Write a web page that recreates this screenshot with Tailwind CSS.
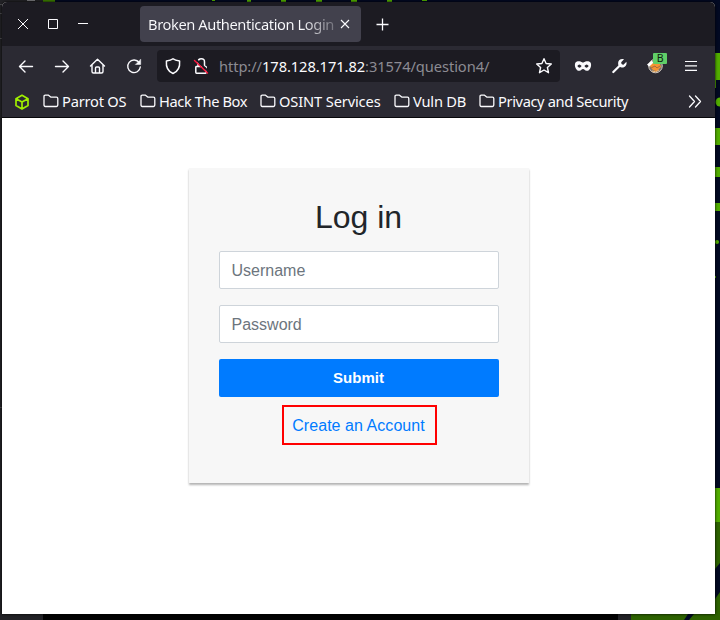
<!DOCTYPE html>
<html lang="en">
<head>
<meta charset="utf-8">
<title>Broken Authentication Login</title>
<script src="https://cdn.jsdelivr.net/npm/@tailwindcss/browser@4"></script>
</head>
<body class="relative h-[620px] w-[720px] overflow-hidden bg-[#020922] font-['Noto_Sans',sans-serif]">
<!-- desktop wallpaper -->
<svg class="absolute inset-0" width="720" height="620" viewBox="0 0 720 620">
  <path fill="#222226" d="M0 0h45v620H0z"/><path stroke="#49494d" d="M0 4.500h4M0 13.500h4M0 38.500h4M0 407.500h4"/>
  <path fill="#77777a" d="M27 0h8v1h-8z"/><path fill="#3c7a00" d="M43 0h12v2H43z"/>
  <g fill="#52ad00"><path d="M212 0h3v1h-3zM247 0h4v2h-4zM281 0h5v2h-5zM316 0h6v2h-6zM351 0h6v2h-6zM387 0h5v2h-5zM422 0h5v1h-5z"/>
  <rect x="708" y="53" width="24" height="27" rx="5"/><path d="M715 80h1v8h-1z"/><circle cx="720" cy="102" r="4.500"/><rect x="710" y="128" width="15" height="17" rx="4"/><rect x="711" y="167" width="14" height="10" rx="3"/><rect x="712" y="203" width="12" height="8" rx="2"/><circle cx="717" cy="242" r="2"/><path d="M715 276h1v2h-1z"/><path d="M715 488h5v34h-5z"/></g>
  <path fill="#2d6200" d="M617 614h98v-92h5v98H631z"/><path fill="#020922" d="M715 569l5-6v29l-5 7zM688 614h6l-5 6h-5z"/>
  <path fill="#020202" d="M43 614h575v6H43z"/><path fill="#222226" d="M618 614h13v6h-13z"/>
</svg>
<div class="relative ml-[2px] mt-[2px] flex h-[612px] w-[713px] flex-col overflow-hidden rounded-t-[5px] bg-white shadow-[0_0_3px_#000]">
  <!-- tab strip -->
  <div class="flex h-11 shrink-0 items-start bg-[#1c1b22] text-[#fbfbfe]">
    <svg class="shrink-0" width="138" height="44" fill="none" stroke="currentColor"><path d="M16 17l10 10M26 17l-10 10M76 21.500h10"/><path d="M46.500 17.500h9v9h-9z"/></svg>
    <div class="mt-1 flex h-9 w-[221px] items-center rounded bg-[#42414d] pl-[8px]">
      <div class="w-[187px] whitespace-nowrap bg-linear-to-r from-[#fbfbfe] from-82% to-[#fbfbfe]/25 bg-clip-text text-[14.67px] leading-6 tracking-[-0.4px] text-transparent">Broken Authentication Login</div>
      <svg class="ml-[5px]" width="10" height="10" fill="none" stroke="currentColor" stroke-width="1.100"><path d="M1 1l8 8M9 1l-8 8"/></svg>
    </div>
    <svg class="ml-[15px] mt-4" width="13" height="13" stroke="currentColor" stroke-width="1.300"><path d="M6.500 0.500v12M0.500 6.500h12"/></svg>
  </div>
  <!-- navigation bar -->
  <div class="flex h-10 shrink-0 items-center bg-[#2b2a33] text-[#fbfbfe]">
    <svg class="shrink-0" width="155" height="40" fill="none" stroke="currentColor" stroke-width="1.400" stroke-linecap="round" stroke-linejoin="round">
      <path d="M30.500 20.500H17.500M23 15l-5.500 5.500L23 26M53.500 20.500h13M61 15l5.500 5.500L61 26"/>
      <path d="M88.500 20l7-6.800 7 6.800M90 19v6.500q0 1.500 1.500 1.500h8q1.500 0 1.500-1.500V19M93.500 27v-5q0-1 1-1h2q1 0 1 1v5"/>
      <path d="M137.200 16.700A6.300 6.300 0 1 0 138.300 21"/><path fill="currentColor" stroke-width=".5" d="M138.700 13.500v5h-5z"/>
    </svg>
    <div class="flex h-8 w-[403px] items-center rounded bg-[#1c1b22]">
      <svg class="shrink-0" width="62" height="32" fill="none" stroke="currentColor" stroke-width="1.500" stroke-linejoin="round" stroke-linecap="round">
        <path d="M16 8.700c2 1.700 4 2 6.600 2.300.5 5.500-1.600 10.500-6.600 12.500-5-2-7.100-7-6.600-12.500C12 10.700 14 10.400 16 8.700z"/>
        <path d="M39.500 16.500h9q.7 0 .7.700v5q0 1-.7 1h-9q-.7 0-.7-1v-5q0-.7.700-.7M41 15.500V12q0-3.300 3.300-3.300T47.500 12v4"/><path stroke="#1c1b22" stroke-width="2" d="M39 9.500l12.500 12"/><path stroke="#ff173f" stroke-width="1.400" d="M37.500 10.500l13 12.500"/>
      </svg>
      <div class="w-[309px] whitespace-nowrap text-[14.67px] leading-6 tracking-[-0.07px] text-[#8c8b92]">http://<span class="text-[#fbfbfe]">178.128.171.82</span>:31574/question4/</div>
      <svg class="ml-[7px]" width="18" height="18" viewBox="0 0 18 18" fill="none" stroke="currentColor" stroke-width="1.400" stroke-linejoin="round"><path d="M9 1.700l2.100 4.800 5.200.5-3.900 3.500 1.100 5.200L9 13l-4.500 2.700 1.100-5.200L1.700 7l5.200-.5z"/></svg>
    </div>
    <svg class="shrink-0" width="153" height="40" viewBox="0 0 153 40" fill="none" stroke="currentColor">
      <path fill="currentColor" fill-rule="evenodd" stroke="none" d="M15.500 16.500C16.500 15.300 18 15 19.500 15.200C21 15.400 22 16.200 23 16.800C24 16.200 25 15.400 26.500 15.200C28 15 29.500 15.300 30.500 16.500C31.400 18 31.300 20.500 30.300 22.300C29.400 24.200 28 25 26.500 24.800C24.900 24.500 24.200 23 23 23C21.800 23 21.100 24.500 19.500 24.800C18 25 16.600 24.200 15.700 22.300C14.700 20.500 14.600 18 15.500 16.500zM17.300 20.100Q19.300 16.800 21.600 20.100Q19.500 23.200 17.300 20.100zM24.400 20.100Q26.700 16.800 28.700 20.100Q26.500 23.200 24.400 20.100z"/>
      <path stroke-width="2.200" stroke-linecap="round" d="M53.300 26l7.400-7.300"/><path fill="currentColor" stroke="none" d="M64 13.300l-2.800 3 .3 2 2 .4 2.900-3c.8 3.500-1.400 6.100-4.800 5.700-2.300-.3-3.700-2-3.500-4.400.2-2.900 2.800-4.700 5.900-3.700z"/>
      <circle cx="95.500" cy="20" r="6.800" fill="#77706d" stroke="#cfc6bd"/><path fill="#fff" stroke="none" d="M87 18.500l5-4 2 4-5 2z"/><path fill="#f49432" stroke="none" d="M90 20l5-5 5 3 1 3-4 4q-5 0-7-5z"/><path stroke="#a66a3e" d="M91 22l4-2 2 2 3-2"/><path stroke="#f4bc79" d="M92 25q4 2 7-1"/>
      <rect x="93" y="7" width="14" height="11" rx="1" fill="#60cf68" stroke="none"/><text x="96.800" y="16" font-family="Noto Sans, sans-serif" font-size="10.500" fill="#10210f" stroke="none">B</text>
      <path stroke-width="1.200" d="M125 15.500h12M125 19.800h12M125 24.300h12"/>
    </svg>
  </div>
  <!-- bookmarks -->
  <div class="flex h-8 shrink-0 items-center border-b border-[#08080b] bg-[#2b2a33] pb-px text-[14.67px] leading-6 whitespace-nowrap text-[#fbfbfe]">
    <svg width="0" height="0" class="hidden"><symbol id="folder" viewBox="0 0 16 16"><path fill="none" stroke="currentColor" stroke-width="1.300" stroke-linejoin="round" d="M1 3.500q0-1.300 1.300-1.300h3.200l2.200 1.900h5.800q1.300 0 1.300 1.300v6.700q0 1.400-1.300 1.400H2.300Q1 13.500 1 12.100z"/></symbol></svg>
    <div class="w-[41px] pl-3 pt-px"><svg width="16" height="16" fill="none" stroke="#9fef00" stroke-width="1.700" stroke-linejoin="round"><path d="M8 1.300l6 3.400v6.800l-6 3.400-6-3.400V4.700zM2 4.700L8 8l6-3.300M8 8v6.900"/></svg></div>
    <div class="flex w-[97px] items-center gap-[3px] tracking-[-0.22px]"><svg class="size-4"><use href="#folder"/></svg>Parrot OS</div>
    <div class="flex w-[120px] items-center gap-[3px] tracking-[-0.4px]"><svg class="size-4"><use href="#folder"/></svg>Hack The Box</div>
    <div class="flex w-[134px] items-center gap-[3px] tracking-[-0.14px]"><svg class="size-4"><use href="#folder"/></svg>OSINT Services</div>
    <div class="flex w-[85px] items-center gap-[3px] tracking-[-0.2px]"><svg class="size-4"><use href="#folder"/></svg>Vuln DB</div>
    <div class="flex w-[209px] items-center gap-[3px] tracking-[-0.38px]"><svg class="size-4"><use href="#folder"/></svg>Privacy and Security</div>
    <svg width="16" height="16" fill="none" stroke="currentColor" stroke-width="1.300" stroke-linecap="round" stroke-linejoin="round"><path d="M1.500 3L6.500 8.500l-5 5.500M7.500 3l5 5.500-5 5.500"/></svg>
  </div>
  <!-- page -->
  <main class="flex flex-1 flex-col items-center bg-white pl-px pt-[50px] font-['Liberation_Sans',sans-serif] text-base text-[#212529]">
    <form class="flex h-[315px] w-[340px] flex-col items-center bg-[#f7f7f7] px-[30px] pt-[30px] shadow-[0_2px_2px_rgba(0,0,0,0.3)]">
      <h1 class="mb-[15px] pr-px text-[32px] leading-[38px]">Log in</h1>
      <input type="text" placeholder="Username" class="mb-4 h-[38px] w-full shrink-0 rounded-[2px] border border-[#ced4da] bg-white px-[11.5px] pt-0.5 placeholder:text-[#6c757d]">
      <input type="password" placeholder="Password" class="mb-4 h-[38px] w-full shrink-0 rounded-[2px] border border-[#ced4da] bg-white px-[11.5px] pt-0.5 placeholder:text-[#6c757d]">
      <button type="button" class="mb-2 h-[38px] w-full shrink-0 rounded-[2px] bg-[#007bff] pr-px text-[15px] font-bold text-white">Submit</button>
      <a class="flex h-10 w-[155px] items-center justify-center border-2 border-[#ff0000] pr-px pt-0.5 tracking-[0.05px] text-[#007bff]">Create an Account</a>
    </form>
  </main>
</div>
</body>
</html>
